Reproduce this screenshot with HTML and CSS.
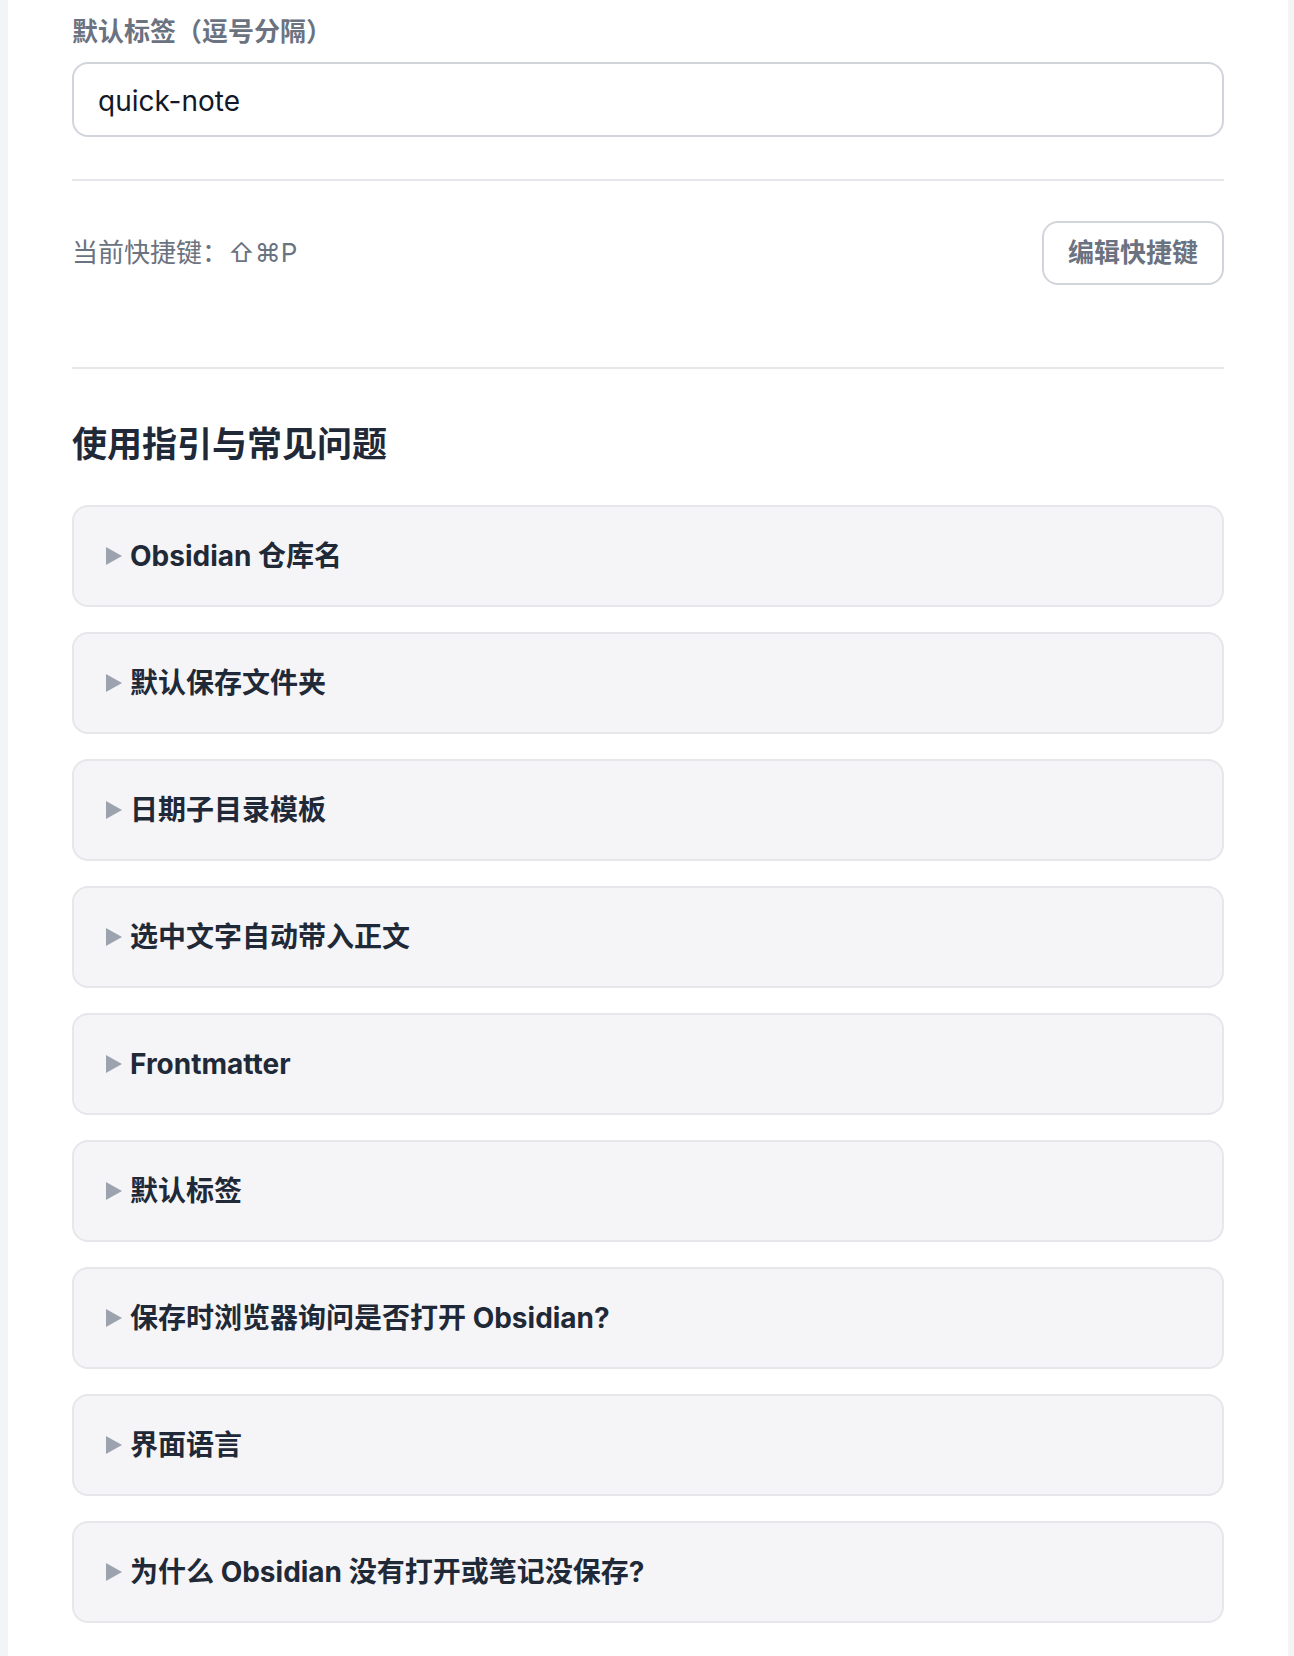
FILE: index.html
```html
<!DOCTYPE html>
<html lang="zh-CN">
<head>
    <meta charset="UTF-8">
    <meta name="viewport" content="width=device-width, initial-scale=1.0">
    <title>设置</title>
    <link rel="stylesheet" href="styles.css">
</head>
<body>
    <div class="settings-page">
        <div class="field">
            <label class="field-label" for="default-tags">默认标签（逗号分隔）</label>
            <input class="field-input" type="text" id="default-tags" value="quick-note">
        </div>

        <div class="shortcut-row">
            <span class="shortcut-text">当前快捷键：⇧⌘P</span>
            <button class="shortcut-button" type="button">编辑快捷键</button>
        </div>

        <h2 class="guide-title">使用指引与常见问题</h2>

        <div class="faq-list">
            <details class="faq-item">
                <summary>Obsidian 仓库名</summary>
            </details>
            <details class="faq-item">
                <summary>默认保存文件夹</summary>
            </details>
            <details class="faq-item">
                <summary>日期子目录模板</summary>
            </details>
            <details class="faq-item">
                <summary>选中文字自动带入正文</summary>
            </details>
            <details class="faq-item">
                <summary>Frontmatter</summary>
            </details>
            <details class="faq-item">
                <summary>默认标签</summary>
            </details>
            <details class="faq-item">
                <summary>保存时浏览器询问是否打开 Obsidian?</summary>
            </details>
            <details class="faq-item">
                <summary>界面语言</summary>
            </details>
            <details class="faq-item">
                <summary>为什么 Obsidian 没有打开或笔记没保存?</summary>
            </details>
        </div>
    </div>
</body>
</html>
```

FILE: styles.css
```css
:root {
    --page-bg: #f3f4f6;
    --card-bg: #f5f5f7;
    --border: #e5e7eb;
    --input-border: #d1d5db;
    --text: #1f2937;
    --muted: #6b7280;
    --marker: #9ca3af;
}

* {
    margin: 0;
    padding: 0;
    box-sizing: border-box;
}

body {
    font-family: Inter, "Noto Sans CJK SC", "DejaVu Sans", sans-serif;
    background-color: var(--page-bg);
    color: var(--text);
    padding: 0 6px 0 8px;
    min-height: 100vh;
}

.settings-page {
    background-color: #ffffff;
    min-height: 100vh;
    padding: 14px 64px 40px;
}

.field {
    padding-bottom: 42px;
    border-bottom: 2px solid var(--border);
}

.field-label {
    display: block;
    font-size: 26px;
    line-height: 36px;
    font-weight: 600;
    color: var(--muted);
    margin-bottom: 12px;
}

.field-input {
    width: 100%;
    padding: 20px 24px 17px;
    font-family: inherit;
    font-size: 28px;
    line-height: 34px;
    color: #111827;
    background-color: #ffffff;
    border: 2px solid var(--input-border);
    border-radius: 16px;
}

.field-input:focus {
    outline: none;
}

.shortcut-row {
    display: flex;
    justify-content: space-between;
    align-items: center;
    padding: 40px 0 82px;
    border-bottom: 2px solid var(--border);
}

.shortcut-text {
    font-size: 26px;
    line-height: 36px;
    color: var(--muted);
}

.shortcut-button {
    font-family: inherit;
    font-size: 26px;
    line-height: 36px;
    font-weight: 600;
    color: var(--muted);
    background-color: #ffffff;
    border: 2px solid var(--input-border);
    border-radius: 16px;
    padding: 12px 24px;
    cursor: pointer;
}

.guide-title {
    font-size: 35px;
    line-height: 48px;
    font-weight: 700;
    color: var(--text);
    margin: 51px 0 37px;
}

.faq-list {
    display: flex;
    flex-direction: column;
    gap: 25px;
}

.faq-item {
    background-color: var(--card-bg);
    border: 2px solid var(--border);
    border-radius: 16px;
    padding: 31px 30px 31px 32px;
}

.faq-item summary {
    list-style: none;
    display: flex;
    align-items: center;
    font-size: 28px;
    line-height: 36px;
    font-weight: 700;
    color: var(--text);
    cursor: pointer;
}

.faq-item summary::-webkit-details-marker {
    display: none;
}

.faq-item summary::before {
    content: "";
    width: 0;
    height: 0;
    border-left: 16px solid var(--marker);
    border-top: 9.5px solid transparent;
    border-bottom: 9.5px solid transparent;
    margin-right: 8px;
    flex-shrink: 0;
}
```
